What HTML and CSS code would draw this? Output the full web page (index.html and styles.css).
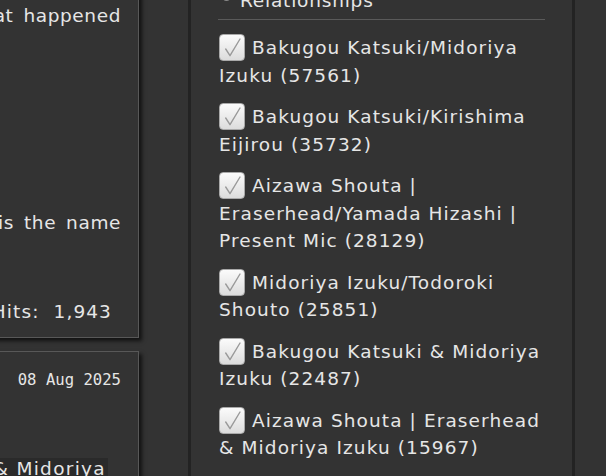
FILE: index.html
```html
<!DOCTYPE html>
<html lang="en">
<head>
<meta charset="utf-8">
<title>Works</title>
<link rel="stylesheet" href="styles.css">
</head>
<body>
<div class="page">
  <main class="main">
    <section class="blurb first">
      <p class="line l1">summary of what happened</p>
      <p class="line l2">and that is the name</p>
      <dl class="stats"><dt>Hits:</dt><dd>1,943</dd></dl>
    </section>
    <section class="blurb second">
      <p class="date">08 Aug 2025</p>
      <p class="tags"><span class="tag">Katsuki &amp; Midoriya</span></p>
    </section>
  </main>
  <aside class="filters">
    <h3 class="heading"><span class="bullet"></span>Relationships</h3>
    <hr class="rule">
    <ul class="options">
      <li class="option"><span class="box"><svg viewBox="0 0 26 27" width="26" height="27"><path d="M6.7 15 L11 21.7 L21 5" fill="none" stroke="#9a9a9a" stroke-width="1.4" stroke-linecap="round" stroke-linejoin="round"/></svg></span>Bakugou Katsuki/Midoriya Izuku (57561)</li>
      <li class="option"><span class="box"><svg viewBox="0 0 26 27" width="26" height="27"><path d="M6.7 15 L11 21.7 L21 5" fill="none" stroke="#9a9a9a" stroke-width="1.4" stroke-linecap="round" stroke-linejoin="round"/></svg></span>Bakugou Katsuki/Kirishima Eijirou (35732)</li>
      <li class="option"><span class="box"><svg viewBox="0 0 26 27" width="26" height="27"><path d="M6.7 15 L11 21.7 L21 5" fill="none" stroke="#9a9a9a" stroke-width="1.4" stroke-linecap="round" stroke-linejoin="round"/></svg></span>Aizawa Shouta | Eraserhead/Yamada Hizashi | Present Mic (28129)</li>
      <li class="option"><span class="box"><svg viewBox="0 0 26 27" width="26" height="27"><path d="M6.7 15 L11 21.7 L21 5" fill="none" stroke="#9a9a9a" stroke-width="1.4" stroke-linecap="round" stroke-linejoin="round"/></svg></span>Midoriya Izuku/Todoroki Shouto (25851)</li>
      <li class="option"><span class="box"><svg viewBox="0 0 26 27" width="26" height="27"><path d="M6.7 15 L11 21.7 L21 5" fill="none" stroke="#9a9a9a" stroke-width="1.4" stroke-linecap="round" stroke-linejoin="round"/></svg></span>Bakugou Katsuki &amp; Midoriya Izuku (22487)</li>
      <li class="option"><span class="box"><svg viewBox="0 0 26 27" width="26" height="27"><path d="M6.7 15 L11 21.7 L21 5" fill="none" stroke="#9a9a9a" stroke-width="1.4" stroke-linecap="round" stroke-linejoin="round"/></svg></span>Aizawa Shouta | Eraserhead &amp; Midoriya Izuku (15967)</li>
    </ul>
  </aside>
</div>
</body>
</html>
```
FILE: styles.css
```css
html, body {
  margin: 0;
  padding: 0;
  background: #333333;
  overflow: hidden;
}
body {
  width: 606px;
  height: 476px;
  font-family: "DejaVu Sans", sans-serif;
  font-size: 18.5px;
  letter-spacing: 1.1px;
  color: #e6e6e6;
}
.page {
  display: flex;
  align-items: flex-start;
}
.main {
  width: 139px;
  flex: none;
  margin-right: 49px;
}
.blurb {
  width: 439px;
  margin-left: -300px;
  box-sizing: border-box;
  border: 1px solid #585858;
  background: #333333;
  box-shadow: 3px 3px 4px rgba(0, 0, 0, 0.65);
  padding-right: 17px;
}
.first {
  margin-top: -10px;
  padding-top: 11px;
  padding-bottom: 11px;
}
.line {
  margin: 0;
  line-height: 28px;
  text-align: right;
  white-space: nowrap;
  letter-spacing: 0.6px;
  word-spacing: 3.5px;
}
.l2 {
  margin-top: 179px;
}
.stats {
  margin: 61px 0 0;
  display: flex;
  justify-content: flex-end;
  line-height: 28px;
}
.stats dt { margin: 0; }
.stats dd { margin: 0 0 0 14px; padding-right: 9px; }
.second {
  margin-top: 13px;
  padding-top: 18px;
  height: 140px;
}
.date {
  margin: 0;
  font-family: "DejaVu Sans Mono", monospace;
  font-size: 15.6px;
  letter-spacing: 0;
  line-height: 20px;
  text-align: right;
}
.tags {
  margin: 65px 13px 0 0;
  line-height: 28px;
  text-align: right;
  white-space: nowrap;
}
.tag {
  background: #2a2a2a;
  padding: 0 2px 0 6px;
  letter-spacing: 1.3px;
}
.filters {
  flex: none;
  border-left: 3px solid #232323;
  border-right: 3px solid #232323;
  padding: 0 27px;
  box-sizing: content-box;
  height: 476px;
  width: 327px;
}
.heading {
  margin: -13px 0 0;
  font-size: 18.5px;
  font-weight: normal;
  letter-spacing: 0.8px;
  line-height: 28px;
  display: flex;
  align-items: center;
  gap: 10px;
  padding-left: 5px;
}
.bullet {
  width: 7px;
  height: 7px;
  border-radius: 50%;
  background: #8a8a8a;
  flex: none;
  margin-bottom: 8px;
}
.rule {
  margin: 4px 0 0;
  border: 0;
  border-top: 1px solid #5a5a5a;
  height: 0;
}
.options {
  list-style: none;
  margin: 14px 0 0;
  padding: 0 0 0 1px;
}
.option {
  line-height: 27.5px;
  margin-bottom: 14px;
}
.box {
  display: inline-block;
  vertical-align: top;
  width: 26px;
  height: 27px;
  box-sizing: border-box;
  margin-right: 7px;
  border: 1px solid #a9a9a9;
  border-radius: 4px;
  background: linear-gradient(#fbfbfb, #dcdcdc);
  position: relative;
  overflow: hidden;
}
.box svg {
  position: absolute;
  left: -1px;
  top: -1px;
}
```
